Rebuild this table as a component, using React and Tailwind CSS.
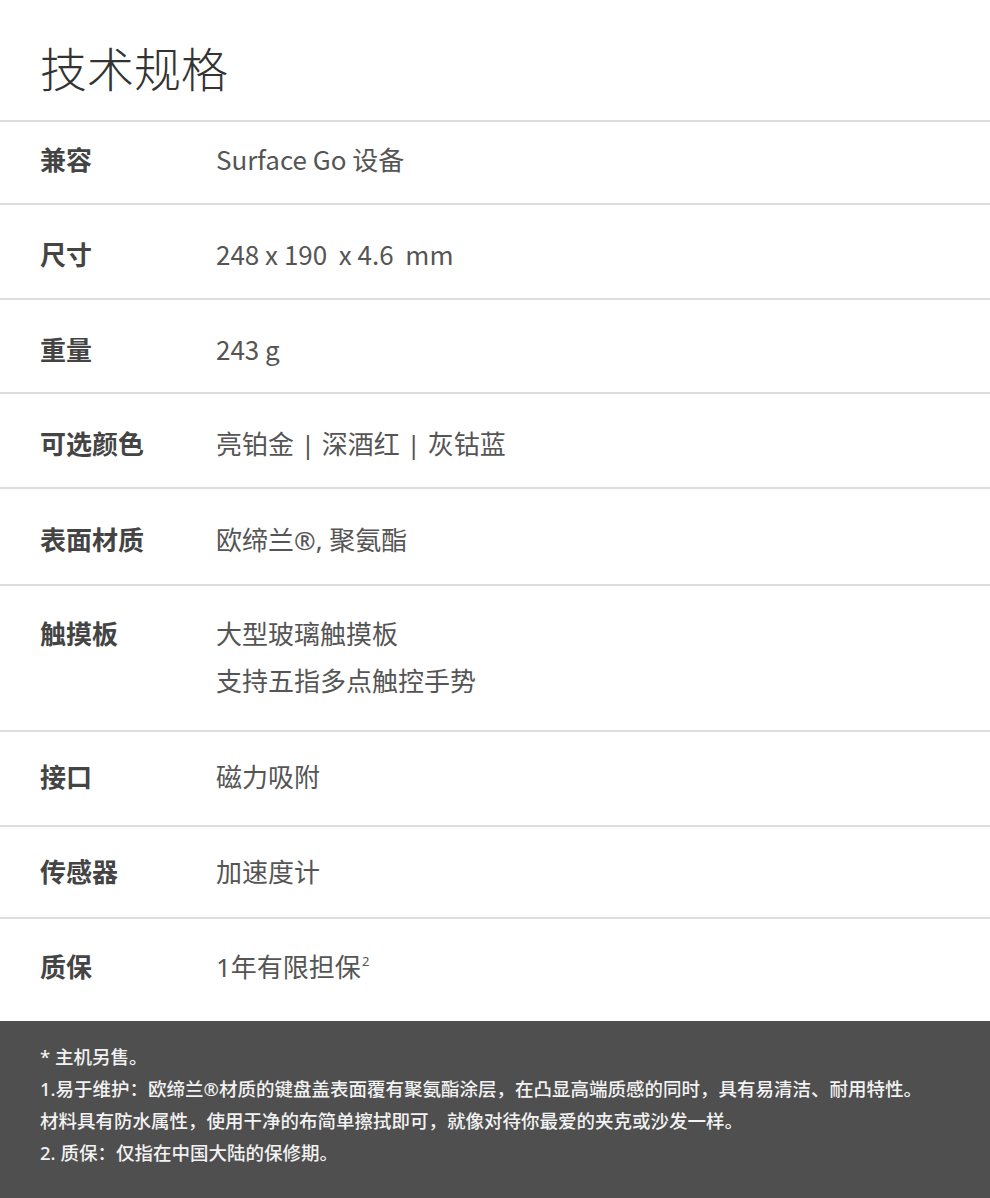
import React from "react";

const rows = [
  { label: "兼容", lines: ["Surface Go 设备"], cls: "pt-[15px] pb-[19px]", cjk: true },
  { label: "尺寸", lines: ["248 x 190  x 4.6  mm"], cls: "pt-[27px] pb-[19px]", cjk: true },
  { label: "重量", lines: ["243 g"], cls: "pt-[27px] pb-[18px]", cjk: true },
  { label: "可选颜色", lines: ["亮铂金 | 深酒红 | 灰钴蓝"], cls: "pt-[27px] pb-[19px]" },
  { label: "表面材质", lines: ["欧缔兰®, 聚氨酯"], cls: "pt-[28px] pb-[20px]" },
  { label: "触摸板", lines: ["大型玻璃触摸板", "支持五指多点触控手势"], cls: "pt-[25px] pb-[25px]" },
  { label: "接口", lines: ["磁力吸附"], cls: "pt-[22px] pb-[24px]" },
  { label: "传感器", lines: ["加速度计"], cls: "pt-[22px] pb-[21px]" },
  { label: "质保", lines: ["1年有限担保"], sup: "2", cls: "pt-[25px] pb-[30px]" },
];

export default function App() {
  const font = { fontFamily: '"Noto Sans", "Noto Sans CJK SC", sans-serif' };
  const cjkFont = { fontFamily: '"Noto Sans CJK SC", "Noto Sans", sans-serif' };
  return (
    <div className="w-[990px] bg-white" style={font}>
      <div className="pl-[40px] pt-[45px] pb-[27px]">
        <h1 className="text-[47px] leading-[48px] font-light text-[#333333]">技术规格</h1>
      </div>
      {rows.map((r) => (
        <div key={r.label} className={`flex border-t-2 border-[#dddddd] ${r.cls}`}>
          <div className="w-[176px] pl-[40px] box-content shrink-0 text-[26px] leading-[47px] font-bold text-[#444444]">
            {r.label}
          </div>
          <div
            className="text-[26px] leading-[47px] text-[#555555] whitespace-pre"
            style={r.cjk ? cjkFont : undefined}
          >
            {r.lines.map((l, i) => (
              <div key={i} className={r.cjk ? "-mt-[2px] mb-[2px]" : ""}>
                {l}
                {r.sup && i === r.lines.length - 1 ? (
                  <sup className="text-[13px] ml-[1px] relative -top-[11px]">{r.sup}</sup>
                ) : null}
              </div>
            ))}
          </div>
        </div>
      ))}
      <div className="bg-[#4f4f4f] pl-[40px] pt-[20px] pb-[29px] text-[18.5px] leading-[32px] font-medium text-[#f2f2f2]">
        <p>* 主机另售。</p>
        <p>1.易于维护：欧缔兰®材质的键盘盖表面覆有聚氨酯涂层，在凸显高端质感的同时，具有易清洁、耐用特性。</p>
        <p>材料具有防水属性，使用干净的布简单擦拭即可，就像对待你最爱的夹克或沙发一样。</p>
        <p>2. 质保：仅指在中国大陆的保修期。</p>
      </div>
    </div>
  );
}
